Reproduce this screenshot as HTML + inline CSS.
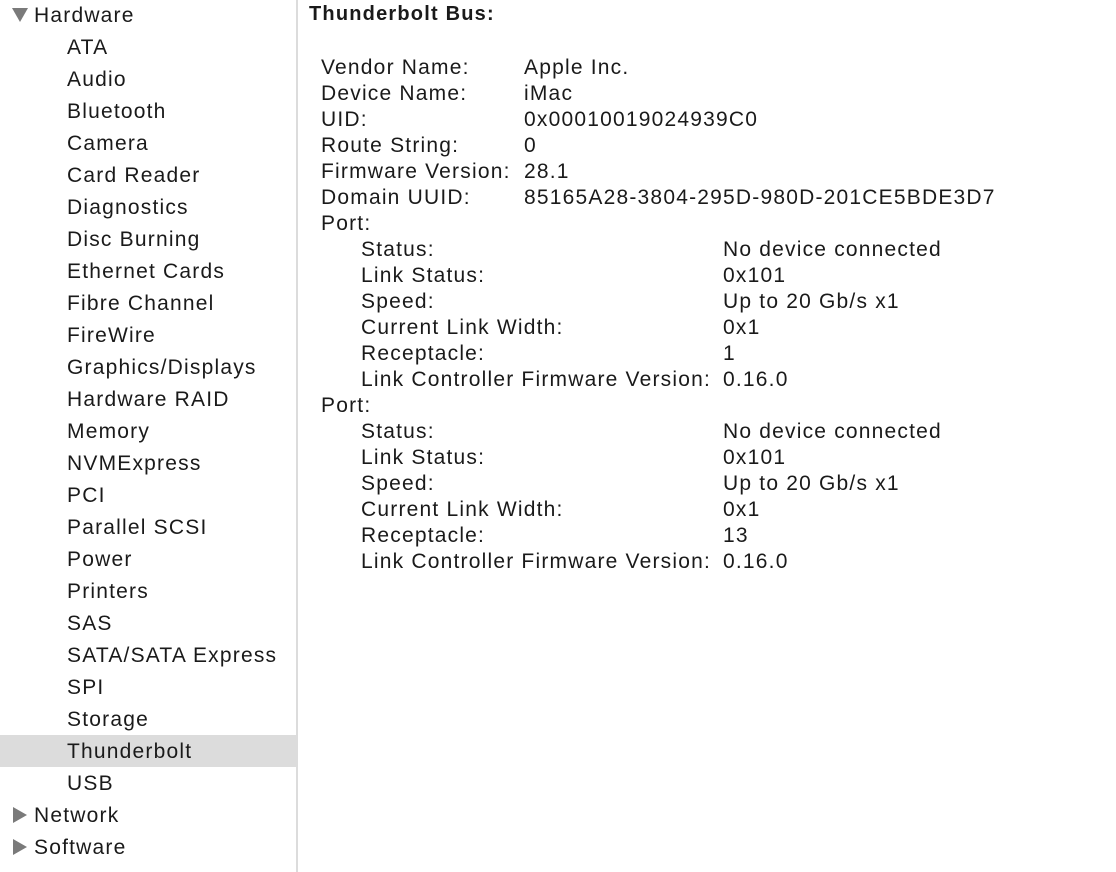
<!DOCTYPE html>
<html><head><style>
body{margin:0;width:1116px;height:872px;background:#fff;font-family:"Liberation Sans",sans-serif;font-size:21px;letter-spacing:1.2px;color:#1a1a1a;overflow:hidden;position:relative}
#side{position:absolute;left:0;top:0;width:296px;height:872px;border-right:2px solid #dcdcdc}
.r{position:absolute;left:0;width:296px;height:32px;line-height:33px;white-space:nowrap}
.sel{background:#dcdcdc}
.t{position:absolute;white-space:nowrap;line-height:27px}
.tri{position:absolute;left:12px;width:0;height:0}
.down{border-left:8px solid transparent;border-right:8px solid transparent;border-top:14px solid #7a7a7a;top:9px}
.right{border-top:8px solid transparent;border-bottom:8px solid transparent;border-left:14px solid #7a7a7a;top:8px;left:13px}
</style></head><body>
<div id="side">
<div class="r" style="top:-1px"><span class="tri down"></span><span style="position:absolute;left:34px">Hardware</span></div>
<div id="items"></div>
</div>
<div class="t" style="left:309px;top:1px;font-weight:bold;font-size:20px">Thunderbolt Bus:</div>
<div id="main"></div>
<script>
var it=["ATA","Audio","Bluetooth","Camera","Card Reader","Diagnostics","Disc Burning","Ethernet Cards","Fibre Channel","FireWire","Graphics/Displays","Hardware RAID","Memory","NVMExpress","PCI","Parallel SCSI","Power","Printers","SAS","SATA/SATA Express","SPI","Storage","Thunderbolt","USB"];
var h="";
it.forEach(function(s,i){h+='<div class="r'+(s=="Thunderbolt"?' sel':'')+'" style="top:'+(31+i*32)+'px"><span style="position:absolute;left:67px">'+s+'</span></div>';});
h+='<div class="r" style="top:799px"><span class="tri right"></span><span style="position:absolute;left:34px">Network</span></div>';
h+='<div class="r" style="top:831px"><span class="tri right"></span><span style="position:absolute;left:34px">Software</span></div>';
document.getElementById("items").innerHTML=h;
var rows=[[321,"Vendor Name:",524,"Apple Inc."],[321,"Device Name:",524,"iMac"],[321,"UID:",524,"0x00010019024939C0"],[321,"Route String:",524,"0"],[321,"Firmware Version:",524,"28.1"],[321,"Domain UUID:",524,"85165A28-3804-295D-980D-201CE5BDE3D7"],[321,"Port:",0,""]];
var port=[["Status:","No device connected"],["Link Status:","0x101"],["Speed:","Up to 20 Gb/s x1"],["Current Link Width:","0x1"],["Receptacle:","1"],["Link Controller Firmware Version:","0.16.0"]];
port.forEach(function(p){rows.push([361,p[0],723,p[1]]);});
rows.push([321,"Port:",0,""]);
port.forEach(function(p,i){rows.push([361,p[0],723,i==4?"13":p[1]]);});
var m="";
rows.forEach(function(r,i){var y=54+i*26;m+='<div class="t" style="left:'+r[0]+'px;top:'+y+'px">'+r[1]+'</div>';if(r[3])m+='<div class="t" style="left:'+r[2]+'px;top:'+y+'px">'+r[3]+'</div>';});
document.getElementById("main").innerHTML=m;
</script>
</body></html>
